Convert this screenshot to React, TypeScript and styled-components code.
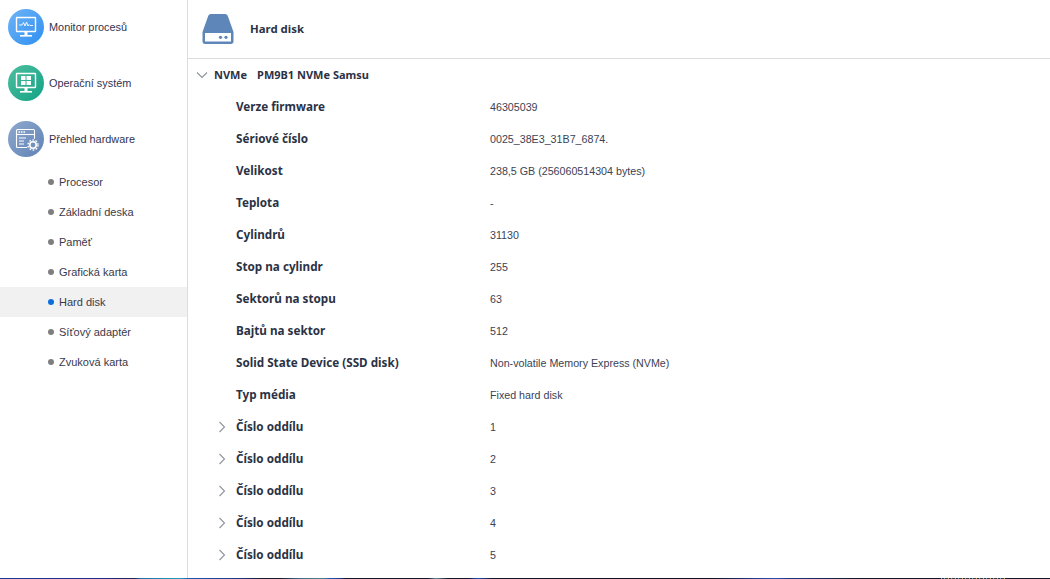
import React from "react";
import styled, { createGlobalStyle } from "styled-components";

const Global = createGlobalStyle`
  html, body { margin: 0; padding: 0; background: #fff; }
  body { font-family: "Liberation Sans", Arial, sans-serif; }
`;
const Page = styled.div`
  width: 1050px; height: 579px; display: flex; flex-direction: column; overflow: hidden; background: #fff;
`;
const Body = styled.div`
  flex: 1; display: flex; min-height: 0;
`;
const Side = styled.nav`
  width: 187px; border-right: 1px solid #dcdcdc; flex: none;
`;
const PrimaryList = styled.div`
  display: flex; flex-direction: column; gap: 2px;
`;
const Primary = styled.div`
  height: 54px; display: flex; align-items: center; gap: 5px; padding-left: 8px; font-size: 10.9px; color: #33334f;
`;
const Sub = styled.div<{ $active?: boolean }>`
  height: 30px; display: flex; align-items: center; padding-left: 48px; gap: 5px; font-size: 11px; color: #3a3a4a;
  background: ${p => (p.$active ? "#f1f1f1" : "transparent")};
`;
const Dot = styled.span<{ $active?: boolean }>`
  width: 6px; height: 6px; border-radius: 50%; margin-top: -1px; background: ${p => (p.$active ? "#0a6fdc" : "#7f7f7f")};
`;
const SubList = styled.div`
  padding-top: 1px;
`;
const Main = styled.main`
  flex: 1; min-width: 0;
`;
const Bold = styled.span`
  font-family: "Noto Sans", sans-serif; font-weight: 700; color: #2b3245; margin-top: -2px;
`;
const Header = styled.header`
  height: 58px; border-bottom: 1px solid #dcdcdc; display: flex; align-items: center; padding-left: 14px; gap: 16px;
  font-size: 11.4px;
`;
const Row = styled.div`
  height: 32px; display: grid; grid-template-columns: 302px 1fr; align-items: center;
`;
const Label = styled.div`
  padding: 0 0 2px 48px; font-size: 11.7px; position: relative;
`;
const Value = styled.div`
  font-size: 10.7px; color: #3c4254;
`;
const Chev = styled.svg`
  position: absolute; left: 29px; top: 50%; margin-top: -6px;
`;
const Top = styled.div`
  height: 32px; display: flex; align-items: center; padding-left: 8px; gap: 6px; font-size: 11px;
`;
const TopModel = styled(Bold)`
  margin-left: 4px;
`;
const Strip = styled.div`
  height: 1px; flex: none;
  background:
    repeating-linear-gradient(90deg, #c8a860 0 1px, #23304a 1px 3px, #6aa0c0 3px 4px, #3a3a3a 4px 7px) 941px 0 / 64px 1px no-repeat,
    linear-gradient(90deg, #1c3a9c 0, #1e2f8a 100px, #1d2a55 135px, #1f6fa8 140px, #1f9fb5 180px, #1c54b4 190px, #1c3a80 240px, #161a30 262px,
      #161a30 280px, #3f6f8c 300px, #4f8090 323px, #1c54b4 330px, #1c3f90 340px, #12152a 345px, #12152a 428px, #5f8a9a 436px, #12152a 448px,
      #12152a 468px, #1c54b4 478px, #12152a 492px, #0f1020 600px, #0f1020 712px, #1c3a80 750px, #2a4fb0 775px, #1c3a80 790px, #12152a 860px,
      #12152a 1050px);
`;

const Circle = ({ id, c1, c2, children }: { id: string; c1: string; c2: string; children: React.ReactNode }) => (
  <svg width="36" height="36" viewBox="0 0 36 36">
    <defs>
      <linearGradient id={id} x1="0" y1="0" x2="1" y2="1">
        <stop offset="0" stopColor={c1} />
        <stop offset="1" stopColor={c2} />
      </linearGradient>
    </defs>
    <circle cx="18" cy="18" r="18" fill={`url(#${id})`} />
    {children}
  </svg>
);

const Screen = () => (
  <>
    <rect x="8.5" y="8.5" width="19" height="14" rx="0.5" fill="none" stroke="#fff" strokeWidth="1.4" />
    <rect x="16.5" y="23" width="3" height="3" fill="#fff" />
    <rect x="12" y="26" width="12" height="1.6" fill="#fff" />
  </>
);

const IconMonitor = () => (
  <Circle id="a" c1="#6db4f7" c2="#2f8ff0">
    <Screen />
    <path d="M11 16h3l1.5-2.5 1.5 3.5 1.5-4 1.5 4 1-1.5 1 1h3" fill="none" stroke="#fff" strokeWidth="0.9" />
  </Circle>
);
const IconOs = () => (
  <Circle id="b" c1="#4fbf9f" c2="#12a285">
    <Screen />
    <path d="M13 11h4.5v4H13zM18.5 11H23v4h-4.5zM13 16h4.5v4H13zM18.5 16H23v4h-4.5z" fill="#fff" />
  </Circle>
);
const IconHw = () => (
  <Circle id="c" c1="#8fa9cf" c2="#5f82b4">
    <rect x="8.5" y="8.5" width="18" height="18" rx="1" fill="none" stroke="#fff" strokeWidth="1.1" />
    <path d="M8.5 13.5h18" stroke="#fff" strokeWidth="1.1" />
    <path d="M10.5 11h1.5M13 11h1.5M15.5 11h1.5" stroke="#fff" strokeWidth="1.4" />
    <path d="M11 17h7M11 20h5M11 23h5" stroke="#fff" strokeWidth="1.1" />
    <circle cx="25" cy="24" r="6.5" fill="#7492bf" />
    <circle cx="25" cy="24" r="3.2" fill="none" stroke="#fff" strokeWidth="1.6" />
    <circle cx="25" cy="24" r="5" fill="none" stroke="#fff" strokeWidth="1.3" strokeDasharray="1.6 1.6" />
  </Circle>
);
const IconDisk = () => (
  <svg width="32" height="30" viewBox="0 0 32 30">
    <path d="M6 2.5C6.4 1 7.4 0 9 0h14c1.6 0 2.6 1 3 2.5L31.5 18v9.5c0 1.4-1 2.5-2.5 2.5H3c-1.5 0-2.5-1.1-2.5-2.5V18z" fill="#5f86b8" />
    <rect x="3" y="19" width="26" height="8.5" fill="#fff" />
    <circle cx="18.5" cy="23.3" r="1.6" fill="#5f86b8" />
    <circle cx="24" cy="23.3" r="1.6" fill="#5f86b8" />
  </svg>
);

const Right = () => (
  <Chev width="12" height="12" viewBox="0 0 12 12">
    <path d="M2.5 1l5 5-5 5" fill="none" stroke="#8f949c" strokeWidth="1.1" />
  </Chev>
);

const subs = ["Procesor", "Základní deska", "Paměť", "Grafická karta", "Hard disk", "Síťový adaptér", "Zvuková karta"];
const rows = [
  ["Verze firmware", "46305039"],
  ["Sériové číslo", "0025_38E3_31B7_6874."],
  ["Velikost", "238,5 GB (256060514304 bytes)"],
  ["Teplota", "-"],
  ["Cylindrů", "31130"],
  ["Stop na cylindr", "255"],
  ["Sektorů na stopu", "63"],
  ["Bajtů na sektor", "512"],
  ["Solid State Device (SSD disk)", "Non-volatile Memory Express (NVMe)"],
  ["Typ média", "Fixed hard disk"],
];

export default function App() {
  return (
    <Page>
      <Global />
      <Body>
        <Side>
          <PrimaryList>
            <Primary><IconMonitor />Monitor procesů</Primary>
            <Primary><IconOs />Operační systém</Primary>
            <Primary><IconHw />Přehled hardware</Primary>
          </PrimaryList>
          <SubList>
            {subs.map(s => (
              <Sub key={s} $active={s === "Hard disk"}>
                <Dot $active={s === "Hard disk"} />
                {s}
              </Sub>
            ))}
          </SubList>
        </Side>
        <Main>
          <Header><IconDisk /><Bold>Hard disk</Bold></Header>
          <Top>
            <svg width="12" height="12" viewBox="0 0 12 12">
              <path d="M1 3.5l5 5 5-5" fill="none" stroke="#8f949c" strokeWidth="1.1" />
            </svg>
            <Bold>NVMe</Bold>
            <TopModel>PM9B1 NVMe Samsu</TopModel>
          </Top>
          {rows.map(([k, v]) => (
            <Row key={k}>
              <Label><Bold>{k}</Bold></Label>
              <Value>{v}</Value>
            </Row>
          ))}
          {[1, 2, 3, 4, 5].map(n => (
            <Row key={n}>
              <Label><Right /><Bold>Číslo oddílu</Bold></Label>
              <Value>{n}</Value>
            </Row>
          ))}
        </Main>
      </Body>
      <Strip />
    </Page>
  );
}
